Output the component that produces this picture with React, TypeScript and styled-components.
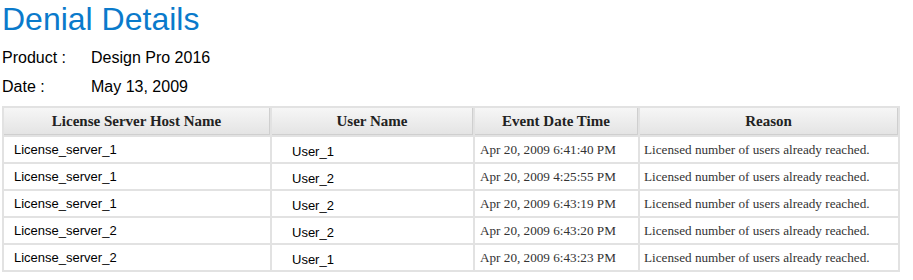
import React from "react";
import styled, { createGlobalStyle } from "styled-components";

const Global = createGlobalStyle`
  html, body { margin: 0; padding: 0; background: #fff; }
  body { font-family: "Liberation Sans", Arial, sans-serif; }
`;

const Page = styled.div`
  padding: 0 2px;
  width: 900px;
`;

const Title = styled.h1`
  margin: 0;
  padding-top: 1px;
  font-family: "Liberation Sans", Arial, sans-serif;
  font-weight: normal;
  font-size: 32px;
  line-height: 36px;
  color: #0a7acb;
`;

const InfoList = styled.div`
  display: grid;
  grid-template-columns: 89px auto;
  margin-top: 6px;
  font-size: 16px;
  color: #000;
`;

const InfoLabel = styled.div`
  line-height: 29px;
`;
const InfoValue = styled.div`
  line-height: 29px;
`;

const Table = styled.table`
  margin-top: 5px;
  width: 898px;
  border-collapse: separate;
  border-spacing: 2px;
  background: #e2e2e2;
  table-layout: fixed;
`;

const Th = styled.th`
  height: 26px;
  padding: 0;
  background: linear-gradient(#f6f6f6, #e4e4e4);
  border-bottom: 1px solid #cfcfcf;
  border-right: 1px solid #cfcfcf;
  font-family: "Liberation Serif", "Times New Roman", serif;
  font-weight: bold;
  font-size: 15px;
  color: #222;
  text-align: center;
`;

const Td = styled.td<{ $serif?: boolean; $pad: number; $drop?: number }>`
  height: 25px;
  padding: ${(p) => p.$drop ?? 0}px 0 0 ${(p) => p.$pad}px;
  background: #fff;
  font-family: ${(p) =>
    p.$serif ? `"Liberation Serif", "Times New Roman", serif` : `"Liberation Sans", Arial, sans-serif`};
  font-size: ${(p) => (p.$serif ? 13.2 : 13)}px;
  color: ${(p) => (p.$serif ? "#333" : "#000")};
  white-space: nowrap;
  vertical-align: middle;
  box-sizing: border-box;
`;

const rows = [
  ["License_server_1", "User_1", "Apr 20, 2009 6:41:40 PM"],
  ["License_server_1", "User_2", "Apr 20, 2009 4:25:55 PM"],
  ["License_server_1", "User_2", "Apr 20, 2009 6:43:19 PM"],
  ["License_server_2", "User_2", "Apr 20, 2009 6:43:20 PM"],
  ["License_server_2", "User_1", "Apr 20, 2009 6:43:23 PM"],
];

export default function App() {
  return (
    <>
      <Global />
      <Page>
        <Title>Denial Details</Title>
        <InfoList>
          <InfoLabel>Product :</InfoLabel>
          <InfoValue>Design Pro 2016</InfoValue>
          <InfoLabel>Date :</InfoLabel>
          <InfoValue>May 13, 2009</InfoValue>
        </InfoList>
        <Table>
          <colgroup>
            <col style={{ width: 266 }} />
            <col style={{ width: 201 }} />
            <col style={{ width: 163 }} />
            <col />
          </colgroup>
          <thead>
            <tr>
              <Th>License Server Host Name</Th>
              <Th>User Name</Th>
              <Th>Event Date Time</Th>
              <Th>Reason</Th>
            </tr>
          </thead>
          <tbody>
            {rows.map((r, i) => (
              <tr key={i}>
                <Td $pad={10}>{r[0]}</Td>
                <Td $pad={20} $drop={4}>{r[1]}</Td>
                <Td $pad={5} $serif>{r[2]}</Td>
                <Td $pad={4} $serif>Licensed number of users already reached.</Td>
              </tr>
            ))}
          </tbody>
        </Table>
      </Page>
    </>
  );
}
